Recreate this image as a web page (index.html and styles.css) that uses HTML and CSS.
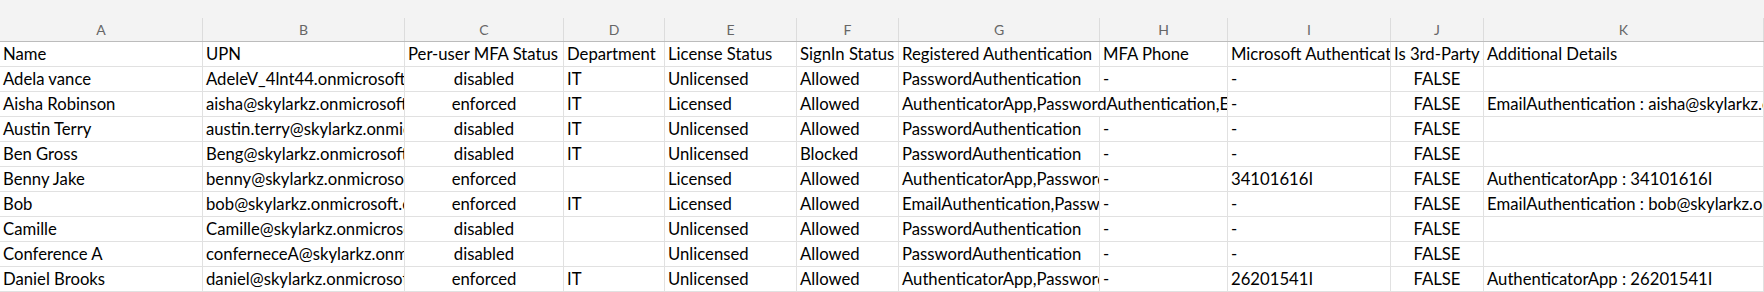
FILE: index.html
```html
<!DOCTYPE html>
<html lang="en">
<head>
    <meta charset="UTF-8">
    <title>MFA Report</title>
    <link rel="stylesheet" href="styles.css">
</head>
<body>
    <div class="sheet">
        <div class="topband"></div>

        <!-- letras das colunas -->
        <div class="grid letters">
            <div class="lh">A</div><div class="lh">B</div><div class="lh">C</div><div class="lh">D</div>
            <div class="lh">E</div><div class="lh">F</div><div class="lh">G</div><div class="lh">H</div>
            <div class="lh">I</div><div class="lh">J</div><div class="lh">K</div>
        </div>

        <div class="grid body">
            <div class="c">Name</div><div class="c">UPN</div><div class="c">Per-user MFA Status</div><div class="c">Department</div><div class="c">License Status</div><div class="c">SignIn Status</div><div class="c">Registered Authentication</div><div class="c">MFA Phone</div><div class="c">Microsoft Authenticator Number</div><div class="c">Is 3rd-Party Authenticator Used</div><div class="c">Additional Details</div>

            <div class="c">Adela vance</div><div class="c">AdeleV_4lnt44.onmicrosoft.com</div><div class="c ctr">disabled</div><div class="c">IT</div><div class="c">Unlicensed</div><div class="c">Allowed</div><div class="c">PasswordAuthentication</div><div class="c">-</div><div class="c">-</div><div class="c ctr">FALSE</div><div class="c"></div>

            <div class="c">Aisha Robinson</div><div class="c">aisha@skylarkz.onmicrosoft.com</div><div class="c ctr">enforced</div><div class="c">IT</div><div class="c">Licensed</div><div class="c">Allowed</div><div class="c span2">AuthenticatorApp,PasswordAuthentication,EmailAuthentication</div><div class="c">-</div><div class="c ctr">FALSE</div><div class="c">EmailAuthentication : aisha@skylarkz.onmicrosoft.com</div>

            <div class="c">Austin Terry</div><div class="c">austin.terry@skylarkz.onmicrosoft.com</div><div class="c ctr">disabled</div><div class="c">IT</div><div class="c">Unlicensed</div><div class="c">Allowed</div><div class="c">PasswordAuthentication</div><div class="c">-</div><div class="c">-</div><div class="c ctr">FALSE</div><div class="c"></div>

            <div class="c">Ben Gross</div><div class="c">Beng@skylarkz.onmicrosoft.com</div><div class="c ctr">disabled</div><div class="c">IT</div><div class="c">Unlicensed</div><div class="c">Blocked</div><div class="c">PasswordAuthentication</div><div class="c">-</div><div class="c">-</div><div class="c ctr">FALSE</div><div class="c"></div>

            <div class="c">Benny Jake</div><div class="c">benny@skylarkz.onmicrosoft.com</div><div class="c ctr">enforced</div><div class="c"></div><div class="c">Licensed</div><div class="c">Allowed</div><div class="c">AuthenticatorApp,PasswordAuthentication</div><div class="c">-</div><div class="c">34101616I</div><div class="c ctr">FALSE</div><div class="c">AuthenticatorApp : 34101616I</div>

            <div class="c">Bob</div><div class="c">bob@skylarkz.onmicrosoft.com</div><div class="c ctr">enforced</div><div class="c">IT</div><div class="c">Licensed</div><div class="c">Allowed</div><div class="c">EmailAuthentication,PasswordAuthentication</div><div class="c">-</div><div class="c">-</div><div class="c ctr">FALSE</div><div class="c">EmailAuthentication : bob@skylarkz.onmicrosoft.com</div>

            <div class="c">Camille</div><div class="c">Camille@skylarkz.onmicrosoft.com</div><div class="c ctr">disabled</div><div class="c"></div><div class="c">Unlicensed</div><div class="c">Allowed</div><div class="c">PasswordAuthentication</div><div class="c">-</div><div class="c">-</div><div class="c ctr">FALSE</div><div class="c"></div>

            <div class="c">Conference A</div><div class="c">conferneceA@skylarkz.onmicrosoft.com</div><div class="c ctr">disabled</div><div class="c"></div><div class="c">Unlicensed</div><div class="c">Allowed</div><div class="c">PasswordAuthentication</div><div class="c">-</div><div class="c">-</div><div class="c ctr">FALSE</div><div class="c"></div>

            <div class="c">Daniel Brooks</div><div class="c">daniel@skylarkz.onmicrosoft.com</div><div class="c ctr">enforced</div><div class="c">IT</div><div class="c">Unlicensed</div><div class="c">Allowed</div><div class="c">AuthenticatorApp,PasswordAuthentication</div><div class="c">-</div><div class="c">26201541I</div><div class="c ctr">FALSE</div><div class="c">AuthenticatorApp : 26201541I</div>
        </div>
    </div>
</body>
</html>
```
FILE: styles.css
```css
body {
    margin: 0;
    background: #fff;
    font-family: 'Lato', sans-serif;
    color: #000;
    overflow: hidden;
}
.topband {
    height: 18px;
    background: #f3f3f3;
}
.grid {
    display: grid;
    grid-template-columns: 203px 202px 159px 101px 132px 102px 201px 128px 163px 93px 1fr;
}
.letters {
    background: #f3f3f3;
    border-bottom: 1px solid #bcbcbc;
}
.lh {
    height: 23px;
    border-right: 1px solid #dcdcdc;
    text-align: center;
    color: #666;
    font-size: 14px;
    line-height: 23px;
}
.c {
    height: 25px;
    box-sizing: border-box;
    border-right: 1px solid #e1e1e1;
    border-bottom: 1px solid #e1e1e1;
    padding: 1px 3px 0;
    overflow: hidden;
    white-space: nowrap;
    font-size: 16.7px;
    line-height: 23px;
}
.ctr {
    text-align: center;
}
.span2 {
    grid-column: span 2;
}
```
